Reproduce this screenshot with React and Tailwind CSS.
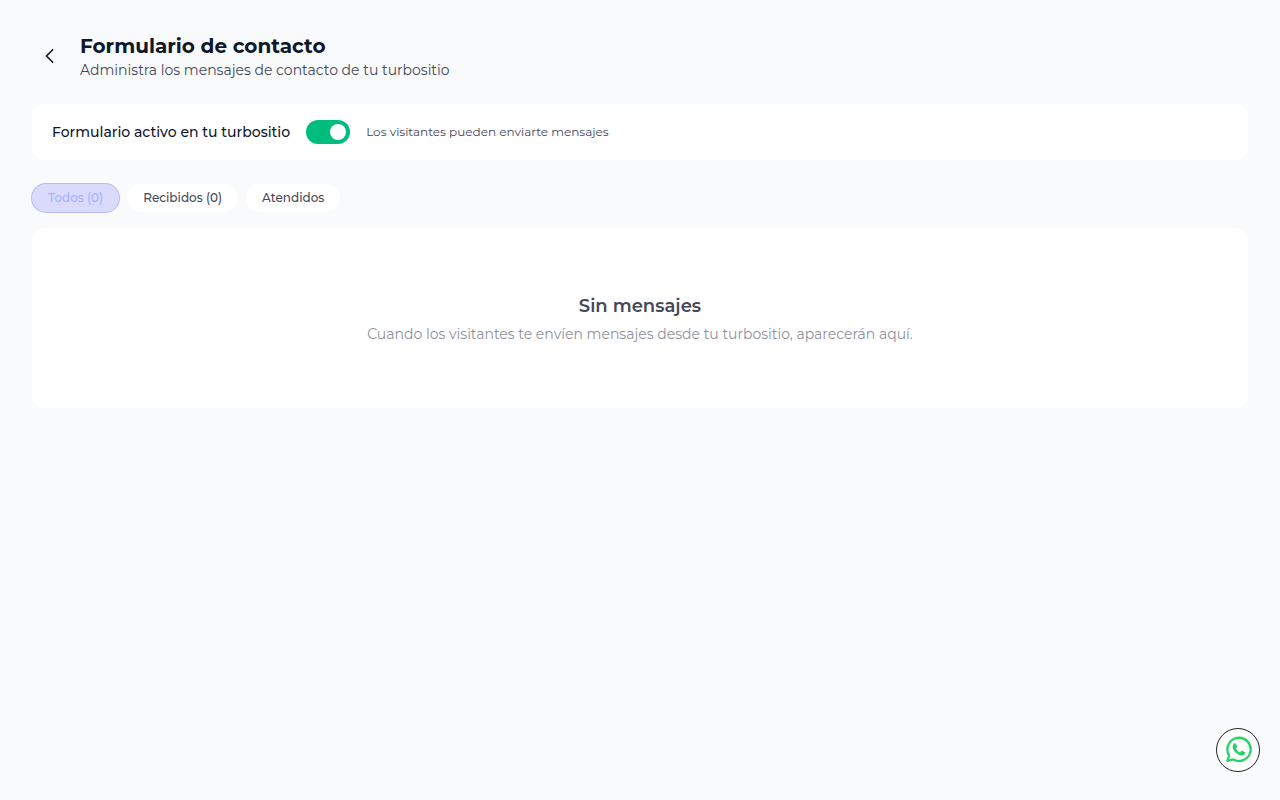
import React, { useState } from 'react';

const TABS = [
  { id: 'todos', label: 'Todos (0)' },
  { id: 'recibidos', label: 'Recibidos (0)' },
  { id: 'atendidos', label: 'Atendidos' },
];

const BackIcon = () => (
  <svg className="w-5 h-5" viewBox="0 0 24 24" fill="none" stroke="currentColor" strokeWidth="2" aria-hidden="true">
    <path strokeLinecap="round" strokeLinejoin="round" d="M15.25 19.5 7.75 12l7.5-7.5" />
  </svg>
);

const WhatsappIcon = () => (
  <svg className="w-7 h-7 shrink-0 text-[#25d366]" viewBox="0 0 28 28" fill="none" aria-hidden="true">
    <path
      d="M5 19.2 3.5 24.9 9.2 23.4A11.6 11.6 0 1 0 5 19.2Z"
      stroke="currentColor"
      strokeWidth="2.3"
      strokeLinejoin="round"
    />
    <path
      d="M10.2 7.2h1c.4 0 .7.2.9.7l1 2.5c.1.4 0 .7-.3 1l-.9 1.1c.9 1.8 2.2 3 4.1 3.9l1.2-1.4c.3-.3.6-.4 1-.2l2.4 1.2c.4.2.6.5.5.9-.3 1.9-1.6 2.7-3.2 2.7-4.6-.3-8.6-4.4-9.2-8.6-.1-1.6.6-3 1.5-3.8Z"
      fill="currentColor"
    />
  </svg>
);

const Toggle = ({ id, checked, onChange }) => (
  <span className="relative inline-flex shrink-0 w-11 h-6">
    <input
      id={id}
      type="checkbox"
      role="switch"
      checked={checked}
      onChange={(e) => onChange(e.target.checked)}
      className="peer appearance-none w-11 h-6 rounded-full bg-gray-300 checked:bg-[#00bc7d] cursor-pointer transition-colors"
    />
    <span className="pointer-events-none absolute top-1 left-1 w-4 h-4 rounded-full bg-white transition-transform peer-checked:translate-x-5" />
  </span>
);

const App = () => {
  const [active, setActive] = useState(true);
  const [tab, setTab] = useState('todos');

  return (
    <div className="min-h-screen bg-[#f9fafc] p-8 font-['Montserrat','Inter',sans-serif] text-[#0f172b] antialiased">
      <header className="flex items-center gap-3 mb-6">
        <button type="button" aria-label="Volver" className="flex items-center justify-center w-9 h-9 rounded-full">
          <BackIcon />
        </button>
        <div>
          <h1 className="text-xl font-bold">Formulario de contacto</h1>
          <p className="text-sm text-[#45475a]">Administra los mensajes de contacto de tu turbositio</p>
        </div>
      </header>

      <section className="flex items-center gap-4 mb-6 px-5 py-4 rounded-xl bg-white">
        <label htmlFor="form-active" className="text-sm font-medium">
          Formulario activo en tu turbositio
        </label>
        <Toggle id="form-active" checked={active} onChange={setActive} />
        <span className="text-xs text-[#45475a]">Los visitantes pueden enviarte mensajes</span>
      </section>

      <div className="flex gap-2 mb-4">
        {TABS.map(({ id, label }) => (
          <button
            key={id}
            type="button"
            onClick={() => setTab(id)}
            className={`px-4 py-1.5 rounded-full text-xs font-medium ${
              tab === id ? 'bg-[#dadafd] text-[#a3b3ff] ring-1 ring-[#b9b9fb]' : 'bg-white text-[#45475a]'
            }`}
          >
            {label}
          </button>
        ))}
      </div>

      <section className="p-16 rounded-xl bg-white text-center">
        <h2 className="mb-1 text-lg font-semibold text-[#45475a]">Sin mensajes</h2>
        <p className="text-sm text-[#8f919d]">
          Cuando los visitantes te envíen mensajes desde tu turbositio, aparecerán aquí.
        </p>
      </section>

      <a
        href="#whatsapp"
        aria-label="WhatsApp"
        className="fixed right-5 bottom-7 flex items-center justify-center w-11 h-11 rounded-full border border-[#222222] bg-white"
      >
        <WhatsappIcon />
      </a>
    </div>
  );
};

export default App;
